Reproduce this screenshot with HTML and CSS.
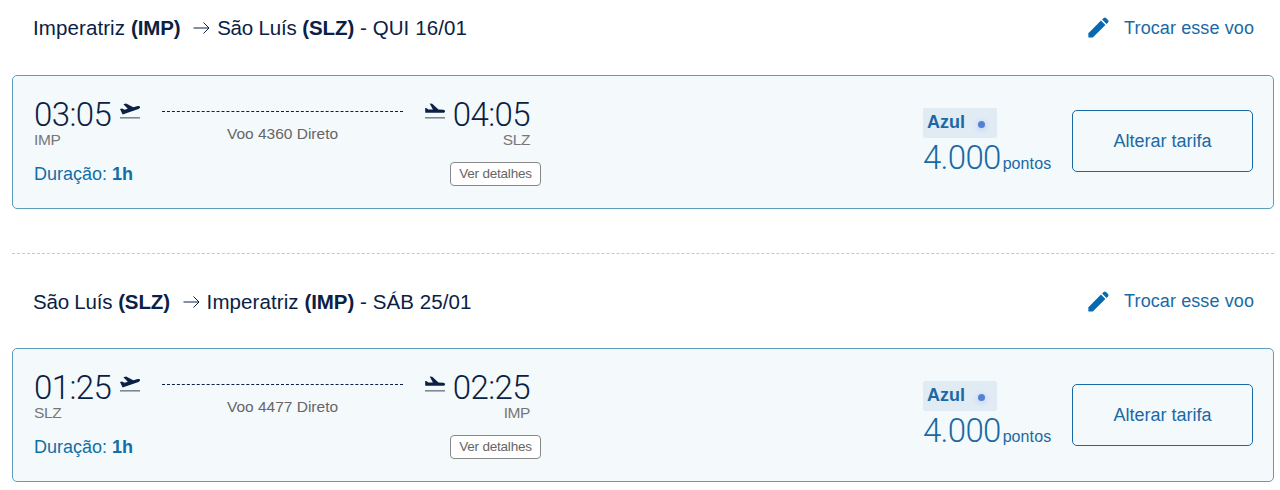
FILE: index.html
```
<!DOCTYPE html>
<html lang="pt-BR">
<head>
  <meta charset="UTF-8">
  <meta name="viewport" content="width=device-width, initial-scale=1.0">
  <title>Seus voos</title>
  <link rel="stylesheet" href="styles.css">
</head>
<body>
  <svg class="sprite" width="0" height="0">
    <symbol id="pencil" viewBox="0 0 24 24">
      <path d="M2.400 21.600v-4.400L15 4.600l4.400 4.400L6.800 21.600z"/>
      <path d="M16.100 3.500l1.500-1.500a1.700 1.700 0 0 1 2.400 0l2 2a1.700 1.700 0 0 1 0 2.400l-1.500 1.500z"/>
    </symbol>
    <symbol id="arrow" viewBox="0 0 17 14">
      <path d="M.5 7h15.500M10.500 1.500L16 7l-5.500 5.500" fill="none" stroke="currentColor"/>
    </symbol>
    <symbol id="takeoff" viewBox="0 0 20 17">
      <path d="M0 6l2-.5 2.600 1.200 3.200-.9L3.400 1.300l2.700-.7 7.200 3.700 4.500-1.200c1.100-.3 2 .1 2.200.9.200.8-.5 1.600-1.500 1.900L2.600 11.500z"/>
      <path class="ground" d="M0 14h20v1.600H0z"/>
    </symbol>
    <symbol id="landing" viewBox="0 0 20 17">
      <path d="M.1 5l1.600.2 1.600 1.300 4.600.1L4.700.6l2.500.2 6.300 5.700 4.800.2c1.100.1 1.800.8 1.700 1.700-.1.900-.8 1.400-1.900 1.400L.3 9.700z"/>
      <path class="ground" d="M0 14h20v1.600H0z"/>
    </symbol>
  </svg>

  <section class="trip">
    <header class="trip-header">
      <h2>Imperatriz <b>(IMP)</b> <svg class="arrow"><use href="#arrow"/></svg> <span class="tight">São Luís</span> <b>(SLZ)</b> - QUI 16/01</h2>
      <a class="change"><svg class="pencil"><use href="#pencil"/></svg>Trocar esse voo</a>
    </header>
    <div class="card">
      <div class="flight">
        <div class="stop">
          <div class="time">03:05 <svg class="plane"><use href="#takeoff"/></svg></div>
          <div class="airport">IMP</div>
          <div class="duration">Duração: <b>1h</b></div>
        </div>
        <div class="route">Voo 4360 Direto</div>
        <div class="stop arrival">
          <div class="time"><svg class="plane"><use href="#landing"/></svg> 04:05</div>
          <div class="airport">SLZ</div>
          <button class="details">Ver detalhes</button>
        </div>
      </div>
      <div class="fare">
        <div class="brand">Azul<span class="dot"></span></div>
        <div class="points">4.000<span>pontos</span></div>
      </div>
      <button class="change-fare">Alterar tarifa</button>
    </div>
  </section>

  <section class="trip">
    <header class="trip-header">
      <h2><span class="tight">São Luís</span> <b>(SLZ)</b> <svg class="arrow"><use href="#arrow"/></svg> Imperatriz <b>(IMP)</b> - SÁB 25/01</h2>
      <a class="change"><svg class="pencil"><use href="#pencil"/></svg>Trocar esse voo</a>
    </header>
    <div class="card">
      <div class="flight">
        <div class="stop">
          <div class="time">01:25 <svg class="plane"><use href="#takeoff"/></svg></div>
          <div class="airport">SLZ</div>
          <div class="duration">Duração: <b>1h</b></div>
        </div>
        <div class="route">Voo 4477 Direto</div>
        <div class="stop arrival">
          <div class="time"><svg class="plane"><use href="#landing"/></svg> 02:25</div>
          <div class="airport">IMP</div>
          <button class="details">Ver detalhes</button>
        </div>
      </div>
      <div class="fare">
        <div class="brand">Azul<span class="dot"></span></div>
        <div class="points">4.000<span>pontos</span></div>
      </div>
      <button class="change-fare">Alterar tarifa</button>
    </div>
  </section>
</body>
</html>
```
FILE: styles.css
```
* {
  box-sizing: border-box;
}
body {
  margin: 0;
  padding: 0 6px 0 12px;
  background: #fff;
  color: #0a2145;
  font-family: "Liberation Sans", Arial, sans-serif;
}
button {
  font-family: inherit;
  cursor: pointer;
}
.sprite {
  display: block;
}
.trip {
  height: 253px;
}
.trip + .trip {
  border-top: 1px dashed #c8c8c8;
  height: 237px;
}
.trip-header {
  display: flex;
  justify-content: space-between;
  align-items: center;
  height: 75px;
  padding: 0 20px 19px 21px;
}
.trip + .trip .trip-header {
  height: 94px;
  padding-top: 1px;
  padding-bottom: 0;
}
h2 {
  margin: 0;
  font-size: 20.5px;
  font-weight: normal;
  letter-spacing: 0.1px;
}
h2 b {
  letter-spacing: -0.1px;
}
.tight {
  letter-spacing: -0.2px;
}
.arrow {
  width: 17px;
  height: 14px;
  margin: 0 1px 0 7px;
}
.change {
  display: flex;
  align-items: center;
  color: #1a69a4;
  font-size: 18px;
  letter-spacing: 0.1px;
}
.pencil {
  width: 24px;
  height: 24px;
  margin-right: 14px;
  fill: #066ab0;
}
.card {
  display: flex;
  height: 134px;
  padding: 0 20px 0 21px;
  border: 1px solid #5b9dbb;
  border-radius: 5px;
  background: #f4f9fc;
}
.flight {
  display: grid;
  grid-template-columns: 128px 241px 127px;
  padding-top: 19px;
}
.time {
  display: flex;
  align-items: center;
  gap: 9px;
  height: 38px;
  font-family: Roboto, sans-serif;
  font-size: 33px;
  font-weight: 300;
  letter-spacing: -0.6px;
}
.arrival .time {
  gap: 8px;
}
.plane {
  width: 20px;
  height: 17px;
  margin-bottom: 5px;
  fill: #0a2145;
}
.ground {
  fill: #7d8795;
}
.airport {
  color: #777;
  font-size: 15.5px;
  letter-spacing: -0.4px;
  line-height: 14px;
}
.duration {
  margin-top: 17px;
  color: #106fa9;
  font-size: 18px;
}
.route {
  height: 32px;
  margin-top: 16px;
  padding-top: 13px;
  border-top: 1px dashed #0a2145;
  color: #666;
  font-size: 15.5px;
  text-align: center;
}
.arrival {
  display: flex;
  flex-direction: column;
  align-items: flex-end;
}
.details {
  width: 91px;
  height: 24px;
  margin: 15px -11px 0 0;
  padding: 0 0 1px;
  border: 1px solid #888;
  border-radius: 4px;
  background: #fff;
  color: #666;
  font-size: 13.5px;
  letter-spacing: -0.2px;
}
.fare {
  width: 149px;
  margin: 32px 0 0 auto;
  color: #1a69a4;
}
.brand {
  display: flex;
  align-items: center;
  width: 74px;
  height: 30px;
  padding: 0 0 1px 4px;
  border-radius: 2px;
  background: #e1ebf4;
  font-size: 18px;
  font-weight: bold;
}
.dot {
  width: 7px;
  height: 7px;
  margin: 3px 0 0 13px;
  border-radius: 50%;
  background: #5580cf;
  box-shadow: 0 1px 4px 2px #cbdcf8;
}
.points {
  font-family: Roboto, sans-serif;
  font-size: 33px;
  font-weight: 300;
  letter-spacing: -0.7px;
  line-height: 39px;
}
.points span {
  margin-left: 2px;
  font-family: "Liberation Sans", Arial, sans-serif;
  font-size: 16px;
  font-weight: normal;
  letter-spacing: 0.1px;
}
.change-fare {
  width: 181px;
  height: 62px;
  margin-top: 34px;
  border: 1px solid #1a69a4;
  border-radius: 5px;
  background: none;
  color: #1a69a4;
  font-size: 18px;
}
.trip + .trip .change-fare {
  margin-top: 35px;
}
```
